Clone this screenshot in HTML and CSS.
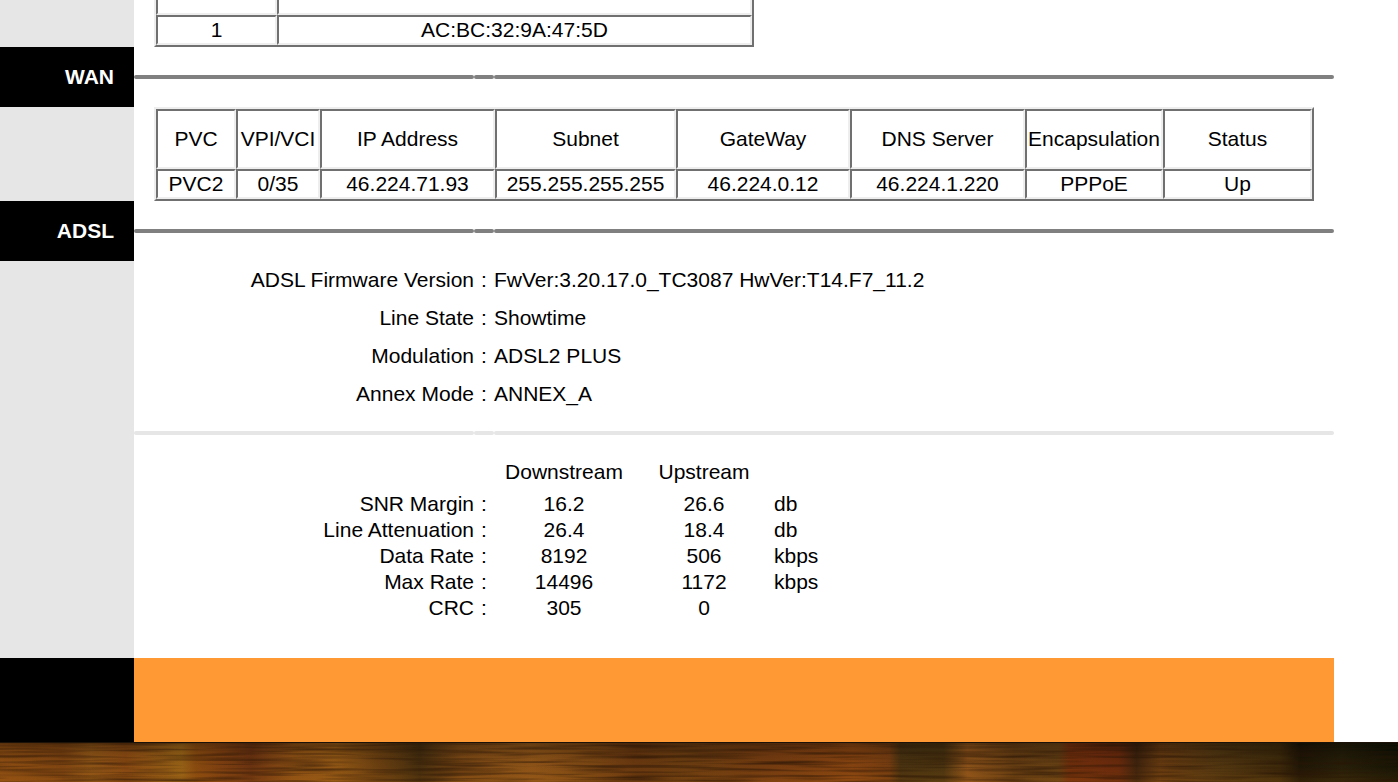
FILE: index.html
```
<!DOCTYPE html>
<html lang="en">
<head>
<meta charset="utf-8">
<title>Device status</title>
<link rel="stylesheet" href="styles.css">
</head>
<body>
<main class="page">
  <section class="row">
    <div class="side"></div>
    <div class="content">
      <table class="grid clients">
        <colgroup><col class="c-index"><col></colgroup>
        <tbody>
          <tr class="cut"><td></td><td></td></tr>
          <tr><td>1</td><td>AC:BC:32:9A:47:5D</td></tr>
        </tbody>
      </table>
    </div>
  </section>

  <section class="row">
    <h2 class="side title">WAN</h2>
    <div class="rule"><i></i><i></i><i></i></div>
  </section>
  <section class="row">
    <div class="side"></div>
    <div class="content">
      <table class="grid wan">
        <colgroup><col class="c-pvc"><col class="c-vpi"><col class="c-ip"><col class="c-subnet"><col class="c-gate"><col class="c-ip"><col class="c-encap"><col></colgroup>
        <thead>
          <tr><th>PVC</th><th>VPI/VCI</th><th>IP Address</th><th>Subnet</th><th>GateWay</th><th>DNS Server</th><th>Encapsulation</th><th>Status</th></tr>
        </thead>
        <tbody>
          <tr><td>PVC2</td><td>0/35</td><td>46.224.71.93</td><td>255.255.255.255</td><td>46.224.0.12</td><td>46.224.1.220</td><td>PPPoE</td><td>Up</td></tr>
        </tbody>
      </table>
    </div>
  </section>

  <section class="row">
    <h2 class="side title">ADSL</h2>
    <div class="rule"><i></i><i></i><i></i></div>
  </section>
  <section class="row">
    <div class="side"></div>
    <div class="details">
      <table class="info">
        <colgroup><col class="c-label"><col class="c-colon"><col></colgroup>
        <tbody>
          <tr><th>ADSL Firmware Version</th><td class="colon">:</td><td>FwVer:3.20.17.0_TC3087 HwVer:T14.F7_11.2</td></tr>
          <tr><th>Line State</th><td class="colon">:</td><td>Showtime</td></tr>
          <tr><th>Modulation</th><td class="colon">:</td><td>ADSL2 PLUS</td></tr>
          <tr><th>Annex Mode</th><td class="colon">:</td><td>ANNEX_A</td></tr>
        </tbody>
      </table>
      <div class="rule light"><i></i><i></i><i></i></div>
      <table class="info stats">
        <colgroup><col class="c-label"><col class="c-colon"><col class="c-rate"><col class="c-rate"><col></colgroup>
        <thead>
          <tr><td></td><td></td><th>Downstream</th><th>Upstream</th><td></td></tr>
        </thead>
        <tbody>
          <tr><th>SNR Margin</th><td class="colon">:</td><td class="num">16.2</td><td class="num">26.6</td><td>db</td></tr>
          <tr><th>Line Attenuation</th><td class="colon">:</td><td class="num">26.4</td><td class="num">18.4</td><td>db</td></tr>
          <tr><th>Data Rate</th><td class="colon">:</td><td class="num">8192</td><td class="num">506</td><td>kbps</td></tr>
          <tr><th>Max Rate</th><td class="colon">:</td><td class="num">14496</td><td class="num">1172</td><td>kbps</td></tr>
          <tr><th>CRC</th><td class="colon">:</td><td class="num">305</td><td class="num">0</td><td></td></tr>
        </tbody>
      </table>
    </div>
  </section>

  <footer class="row">
    <div class="side dark"></div>
    <div class="bar"></div>
  </footer>
</main>

<svg class="water" viewBox="0 0 1398 40" preserveAspectRatio="none" aria-hidden="true">
  <defs>
    <linearGradient id="tone">
      <stop offset="0" stop-color="#8a4c12"/>
      <stop offset=".045" stop-color="#7c4311"/>
      <stop offset=".065" stop-color="#8a5216"/>
      <stop offset=".09" stop-color="#864812"/>
      <stop offset=".13" stop-color="#925f16"/>
      <stop offset=".14" stop-color="#85480f"/>
      <stop offset=".155" stop-color="#7c3f10"/>
      <stop offset=".18" stop-color="#663010"/>
      <stop offset=".21" stop-color="#8a4f14"/>
      <stop offset=".24" stop-color="#8e5515"/>
      <stop offset=".27" stop-color="#663d10"/>
      <stop offset=".3" stop-color="#402b0e"/>
      <stop offset=".33" stop-color="#774614"/>
      <stop offset=".38" stop-color="#8a5218"/>
      <stop offset=".42" stop-color="#784513"/>
      <stop offset=".455" stop-color="#64350f"/>
      <stop offset=".49" stop-color="#663a10"/>
      <stop offset=".55" stop-color="#703910"/>
      <stop offset=".61" stop-color="#824110"/>
      <stop offset=".636" stop-color="#703a10"/>
      <stop offset=".644" stop-color="#443010"/>
      <stop offset=".675" stop-color="#463210"/>
      <stop offset=".692" stop-color="#885019"/>
      <stop offset=".725" stop-color="#603a12"/>
      <stop offset=".757" stop-color="#633f14"/>
      <stop offset=".765" stop-color="#6f2d0c"/>
      <stop offset=".8" stop-color="#64270c"/>
      <stop offset=".813" stop-color="#38200d"/>
      <stop offset=".83" stop-color="#623810"/>
      <stop offset=".87" stop-color="#4c3310"/>
      <stop offset=".915" stop-color="#3a290b"/>
      <stop offset=".93" stop-color="#171205"/>
      <stop offset=".96" stop-color="#1f1b08"/>
      <stop offset="1" stop-color="#0d1004"/>
    </linearGradient>
    <linearGradient id="depth" x2="0" y2="1">
      <stop offset="0" stop-color="#000" stop-opacity=".3"/>
      <stop offset=".3" stop-color="#000" stop-opacity=".08"/>
      <stop offset=".6" stop-color="#c06a10" stop-opacity=".04"/>
      <stop offset="1" stop-color="#e08010" stop-opacity=".14"/>
    </linearGradient>
    <filter id="ripples" x="0" y="0" width="100%" height="100%" color-interpolation-filters="sRGB">
      <feTurbulence type="fractalNoise" baseFrequency=".012 .3" numOctaves="2" seed="8"/>
      <feColorMatrix values="0 0 0 0 .16  0 0 0 0 .08  0 0 0 0 .02  1.5 0 0 0 -.6"/>
    </filter>
  </defs>
  <rect width="1398" height="40" fill="url(#tone)"/>
  <rect width="1398" height="40" fill="url(#depth)"/>
  <rect width="1398" height="40" filter="url(#ripples)"/>
  <rect width="1398" height="1" fill="#1c1208"/>
</svg>
</body>
</html>
```
FILE: styles.css
```
* {
  box-sizing: border-box;
}

body {
  margin: 0;
  background: #fff;
  color: #000;
  font: 21px/26px "Liberation Sans", Arial, Helvetica, sans-serif;
}

.row {
  display: grid;
  grid-template-columns: 134px minmax(0, 1200px);
}

.side {
  background: #e6e6e6;
}

.title {
  margin: 0;
  padding: 17px 20px;
  background: #000;
  color: #fff;
  font-size: 21px;
  font-weight: bold;
  text-align: right;
}

.dark {
  background: #000;
}

.content {
  padding: 0 20px;
}

.details {
  padding-bottom: 37px;
}

.rule {
  display: grid;
  grid-template-columns: 340px 20px 1fr;
  align-items: center;
}

.rule i {
  height: 4px;
  border-radius: 2px;
  background: #808080;
}

.light {
  height: 40px;
}

.light i {
  background: #e6e6e6;
}

table {
  width: 100%;
  border-spacing: 0;
  table-layout: fixed;
}

th,
td {
  padding: 0;
  font-weight: normal;
}

.grid {
  border: 2px solid;
  border-color: #eee #707070 #707070 #eee;
  text-align: center;
}

.grid th,
.grid td {
  height: 30px;
  border: 2px solid;
  border-color: #707070 #eee #eee #707070;
  white-space: nowrap;
}

.grid thead th {
  height: 60px;
}

.clients {
  max-width: 600px;
  border-top: 0;
}

.clients .cut td {
  height: 15px;
  border-top: 0;
}

.c-index { width: 121px; }
.c-pvc { width: 80px; }
.c-vpi { width: 84px; }
.c-ip { width: 175px; }
.c-subnet { width: 181px; }
.c-gate { width: 174px; }
.c-encap { width: 138px; }
.c-label { width: 340px; }
.c-colon { width: 20px; }
.c-rate { width: 140px; }

.info td {
  height: 38px;
  text-align: left;
}

.info tbody th {
  text-align: right;
}

.info .colon,
.info .num {
  text-align: center;
}

.stats tbody td {
  height: 26px;
}

.bar {
  height: 84px;
  background: #f93;
}

.water {
  display: block;
  width: 100%;
  height: 40px;
}
```
